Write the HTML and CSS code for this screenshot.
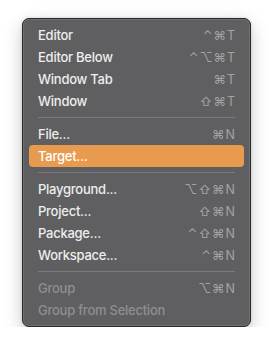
FILE: index.html
```html
<!DOCTYPE html>
<html lang="en">
<head>
    <meta charset="UTF-8">
    <title>New Menu</title>
    <link rel="stylesheet" href="styles.css">
</head>
<body>
    <div class="menu">
        <div class="menu-item"><span class="label">Editor</span><span class="keys">⌃⌘T</span></div>
        <div class="menu-item"><span class="label">Editor Below</span><span class="keys">⌃⌥⌘T</span></div>
        <div class="menu-item"><span class="label">Window Tab</span><span class="keys">⌘T</span></div>
        <div class="menu-item"><span class="label">Window</span><span class="keys">⇧⌘T</span></div>
        <div class="separator"></div>
        <div class="menu-item"><span class="label">File...</span><span class="keys">⌘N</span></div>
        <div class="menu-item selected"><span class="label">Target...</span><span class="keys"></span></div>
        <div class="separator"></div>
        <div class="menu-item"><span class="label">Playground...</span><span class="keys">⌥⇧⌘N</span></div>
        <div class="menu-item"><span class="label">Project...</span><span class="keys">⇧⌘N</span></div>
        <div class="menu-item"><span class="label">Package...</span><span class="keys">⌃⇧⌘N</span></div>
        <div class="menu-item"><span class="label">Workspace...</span><span class="keys">⌃⌘N</span></div>
        <div class="separator"></div>
        <div class="menu-item disabled"><span class="label">Group</span><span class="keys">⌥⌘N</span></div>
        <div class="menu-item disabled"><span class="label">Group from Selection</span><span class="keys"></span></div>
    </div>
</body>
</html>
```

FILE: styles.css
```css
body {
    margin: 0;
    background-color: #ffffff;
    font-family: Inter, 'Noto Sans', sans-serif;
    padding: 18px 0 0 22px;
}

.menu {
    width: 215px;
    background-color: #5f5f61;
    border: 1px solid #2b2b2b;
    border-radius: 7px;
    box-shadow: inset 0 0 0 1px #707072, 0 6px 18px rgba(0, 0, 0, 0.22), 0 0 3px rgba(0, 0, 0, 0.15);
    padding: 5px 6px;
}

.menu-item {
    display: flex;
    justify-content: space-between;
    align-items: center;
    height: 22px;
    padding: 0 8px 0 9px;
    border-radius: 4px;
    font-size: 13px;
    font-weight: 500;
    letter-spacing: -0.25px;
    color: #ededed;
}

.keys {
    font-family: Inter, 'DejaVu Sans', sans-serif;
    font-size: 12.5px;
    font-weight: 400;
    letter-spacing: 1px;
    color: #a3a3a4;
}

.selected {
    background-color: #e89b4f;
    color: #ffffff;
}

.disabled {
    color: #8e8e90;
}

.separator {
    height: 1px;
    margin: 5px 9px;
    background-color: #7a7a7c;
}
```
